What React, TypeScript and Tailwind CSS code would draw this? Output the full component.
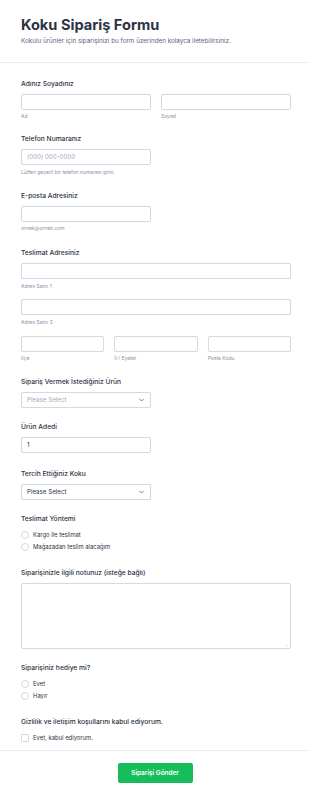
import React from "react";

const labelCls = "text-[6.7px] leading-[9px] font-medium text-[#2c3345]";
const subCls = "text-[5px] leading-[7px] text-[#8d8fa8]";
const inputCls = "h-[16px] rounded-[2px] border border-[#d3d8e1] bg-white shadow-[0_0_1px_rgba(80,90,120,0.08)]";

function Chevron() {
  return (
    <svg width="5" height="4" viewBox="0 0 10 6" className="text-[#57647e]">
      <path d="M1 1l4 4 4-4" fill="none" stroke="currentColor" strokeWidth="1.6" strokeLinecap="round" strokeLinejoin="round" />
    </svg>
  );
}

function Select({ text, light }: { text: string; light?: boolean }) {
  return (
    <div className={`${inputCls} w-[130px] flex items-center justify-between pl-[5px] pr-[6px]`}>
      <span className={`text-[6.2px] leading-[8px] ${light ? "text-[#a3aabd]" : "text-[#2c3345]"}`}>{text}</span>
      <Chevron />
    </div>
  );
}

function Radio({ text }: { text: string }) {
  return (
    <div className="flex items-center h-[12px]">
      <div className="w-[8px] h-[8px] rounded-full border border-[#d3d8e1] bg-white" />
      <span className="ml-[4px] text-[5.9px] leading-[8px] text-[#2c3345]">{text}</span>
    </div>
  );
}

export default function App() {
  return (
    <div className="w-[310px] min-h-[799px] bg-white font-['Inter',sans-serif]">
      <div className="px-[21px] pt-[16px] pb-[16px] border-b border-[#eceef3]">
        <h1 className="text-[14.6px] leading-[18px] font-bold text-[#2c3345]">Koku Sipariş Formu</h1>
        <p className="mt-[3px] text-[6.3px] leading-[9px] text-[#57647e]">
          Kokulu ürünler için siparişinizi bu form üzerinden kolayca iletebilirsiniz.
        </p>
      </div>

      <div className="pl-[21px] pr-[19px] pt-[17px] flex flex-col">
        {/* Name */}
        <div className={labelCls}>Adınız Soyadınız</div>
        <div className="mt-[5px] grid grid-cols-2 gap-[10px]">
          <div>
            <div className={inputCls} />
            <div className={`mt-[3px] ${subCls}`}>Ad</div>
          </div>
          <div>
            <div className={inputCls} />
            <div className={`mt-[3px] ${subCls}`}>Soyad</div>
          </div>
        </div>

        {/* Phone */}
        <div className={`mt-[15px] ${labelCls}`}>Telefon Numaranız</div>
        <div className={`mt-[5px] w-[130px] ${inputCls} flex items-center pl-[5px]`}>
          <span className="text-[6.2px] leading-[8px] text-[#a3aabd]">(000) 000-0000</span>
        </div>
        <div className={`mt-[4px] ${subCls}`}>Lütfen geçerli bir telefon numarası girin.</div>

        {/* Email */}
        <div className={`mt-[16px] ${labelCls}`}>E-posta Adresiniz</div>
        <div className={`mt-[5px] w-[130px] ${inputCls}`} />
        <div className={`mt-[3px] ${subCls}`}>ornek@ornek.com</div>

        {/* Address */}
        <div className={`mt-[17px] ${labelCls}`}>Teslimat Adresiniz</div>
        <div className={`mt-[5px] ${inputCls}`} />
        <div className={`mt-[4px] ${subCls}`}>Adres Satırı 1</div>
        <div className={`mt-[9px] ${inputCls}`} />
        <div className={`mt-[4px] ${subCls}`}>Adres Satırı 2</div>
        <div className="mt-[10px] grid grid-cols-3 gap-[10px]">
          <div>
            <div className={inputCls} />
            <div className={`mt-[3px] ${subCls}`}>İlçe</div>
          </div>
          <div>
            <div className={inputCls} />
            <div className={`mt-[3px] ${subCls}`}>İl / Eyalet</div>
          </div>
          <div>
            <div className={inputCls} />
            <div className={`mt-[3px] ${subCls}`}>Posta Kodu</div>
          </div>
        </div>

        {/* Product */}
        <div className={`mt-[16px] ${labelCls}`}>Sipariş Vermek İstediğiniz Ürün</div>
        <div className="mt-[5px]">
          <Select text="Please Select" light />
        </div>

        {/* Qty */}
        <div className={`mt-[15px] ${labelCls}`}>Ürün Adedi</div>
        <div className={`mt-[5px] w-[130px] ${inputCls} flex items-center pl-[5px]`}>
          <span className="text-[6.2px] leading-[8px] text-[#2c3345]">1</span>
        </div>

        {/* Scent */}
        <div className={`mt-[17px] ${labelCls}`}>Tercih Ettiğiniz Koku</div>
        <div className="mt-[5px]">
          <Select text="Please Select" />
        </div>

        {/* Delivery */}
        <div className={`mt-[15px] ${labelCls}`}>Teslimat Yöntemi</div>
        <div className="mt-[5px] flex flex-col">
          <Radio text="Kargo ile teslimat" />
          <Radio text="Mağazadan teslim alacağım" />
        </div>

        {/* Note */}
        <div className={`mt-[16px] ${labelCls}`}>Siparişinizle ilgili notunuz (isteğe bağlı)</div>
        <div className="mt-[5px] h-[66px] rounded-[2px] border border-[#d3d8e1] bg-white relative">
          <svg width="4" height="4" viewBox="0 0 8 8" className="absolute right-[1px] bottom-[1px]">
            <path d="M7 2L2 7M7 5L5 7" stroke="#c3c8d2" strokeWidth="1" />
          </svg>
        </div>

        {/* Gift */}
        <div className={`mt-[15px] ${labelCls}`}>Siparişiniz hediye mi?</div>
        <div className="mt-[5px] flex flex-col">
          <Radio text="Evet" />
          <Radio text="Hayır" />
        </div>

        {/* Consent */}
        <div className={`mt-[16px] ${labelCls}`}>Gizlilik ve iletişim koşullarını kabul ediyorum.</div>
        <div className="mt-[5px] flex items-center h-[12px]">
          <div className="w-[8px] h-[8px] rounded-[1px] border border-[#d3d8e1] bg-white" />
          <span className="ml-[4px] text-[5.9px] leading-[8px] text-[#2c3345]">Evet, kabul ediyorum.</span>
        </div>
      </div>

      <div className="mt-[6px] border-t border-[#eceef3] flex justify-center pt-[12px] pb-[16px]">
        <button className="w-[75px] h-[20px] rounded-[2px] bg-[#18bd5b] text-white text-[6.4px] font-semibold leading-[8px]">
          Siparişi Gönder
        </button>
      </div>
    </div>
  );
}
